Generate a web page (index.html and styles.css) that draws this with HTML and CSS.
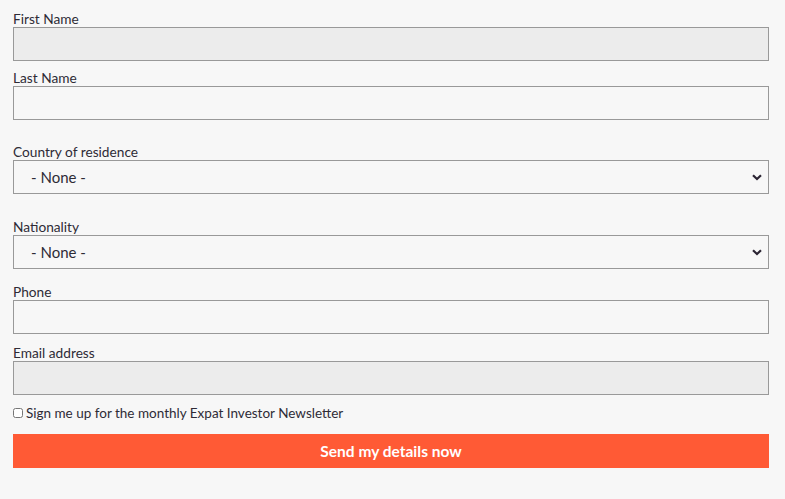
FILE: index.html
```html
<!DOCTYPE html>
<html lang="en">
  <head>
    <meta charset="UTF-8" />
    <title>Contact form</title>
    <link rel="stylesheet" href="styles.css">
  </head>
  <body>
    <form class="details-form">
      <div class="field">
        <label for="firstName">First Name</label>
        <input type="text" id="firstName" class="filled" />
      </div>

      <div class="field field-tight">
        <label for="lastName">Last Name</label>
        <input type="text" id="lastName" />
      </div>

      <div class="field field-wide">
        <label for="country">Country of residence</label>
        <div class="select-wrap">
          <select id="country">
            <option>- None -</option>
          </select>
          <svg class="chevron" viewBox="0 0 10 7" width="10" height="7">
            <path d="M1 1.2 L5 5 L9 1.2" fill="none" stroke="#2b2433" stroke-width="2.2" />
          </svg>
        </div>
      </div>

      <div class="field field-wide">
        <label for="nationality">Nationality</label>
        <div class="select-wrap">
          <select id="nationality">
            <option>- None -</option>
          </select>
          <svg class="chevron" viewBox="0 0 10 7" width="10" height="7">
            <path d="M1 1.2 L5 5 L9 1.2" fill="none" stroke="#2b2433" stroke-width="2.2" />
          </svg>
        </div>
      </div>

      <div class="field field-mid">
        <label for="phone">Phone</label>
        <input type="tel" id="phone" />
      </div>

      <div class="field field-small">
        <label for="email">Email address</label>
        <input type="email" id="email" class="filled" />
      </div>

      <div class="newsletter">
        <input type="checkbox" id="newsletter" />
        <label for="newsletter">Sign me up for the monthly Expat Investor Newsletter</label>
      </div>

      <button type="button">Send my details now</button>
    </form>
  </body>
</html>
```

FILE: styles.css
```css
body {
  margin: 0;
  background: #f7f7f7;
  font-family: Lato, "Open Sans", sans-serif;
  color: #2e2b36;
}

.details-form {
  width: 756px;
  padding: 11px 0 0 13px;
}

.field label {
  display: block;
  font-size: 13.7px;
  line-height: 16px;
}

.field-tight {
  margin-top: 9px;
}

.field-wide {
  margin-top: 24px;
}

.field-wide + .field-wide {
  margin-top: 25px;
}

.field-mid {
  margin-top: 15px;
}

.field-small {
  margin-top: 11px;
}

input[type="text"],
input[type="tel"],
input[type="email"],
select {
  display: block;
  box-sizing: border-box;
  width: 100%;
  height: 34px;
  margin: 0;
  border: 1px solid #999;
  border-radius: 0;
  background: transparent;
  font-family: inherit;
  font-size: 15px;
  color: #2e2b36;
}

input.filled {
  background: #ececec;
}

.select-wrap {
  position: relative;
}

select {
  appearance: none;
  padding: 0 0 0 17px;
}

.chevron {
  position: absolute;
  right: 7px;
  top: 14px;
  pointer-events: none;
}

.newsletter {
  display: flex;
  align-items: center;
  gap: 3px;
  margin-top: 10px;
  height: 16px;
  font-size: 13.5px;
}

.newsletter input {
  width: 10px;
  height: 10px;
  margin: 0;
}

button {
  display: block;
  width: 100%;
  height: 34px;
  margin-top: 13px;
  border: none;
  background: #ff5a35;
  color: #ffffff;
  font-family: inherit;
  font-weight: bold;
  font-size: 15.5px;
  cursor: pointer;
}
```
